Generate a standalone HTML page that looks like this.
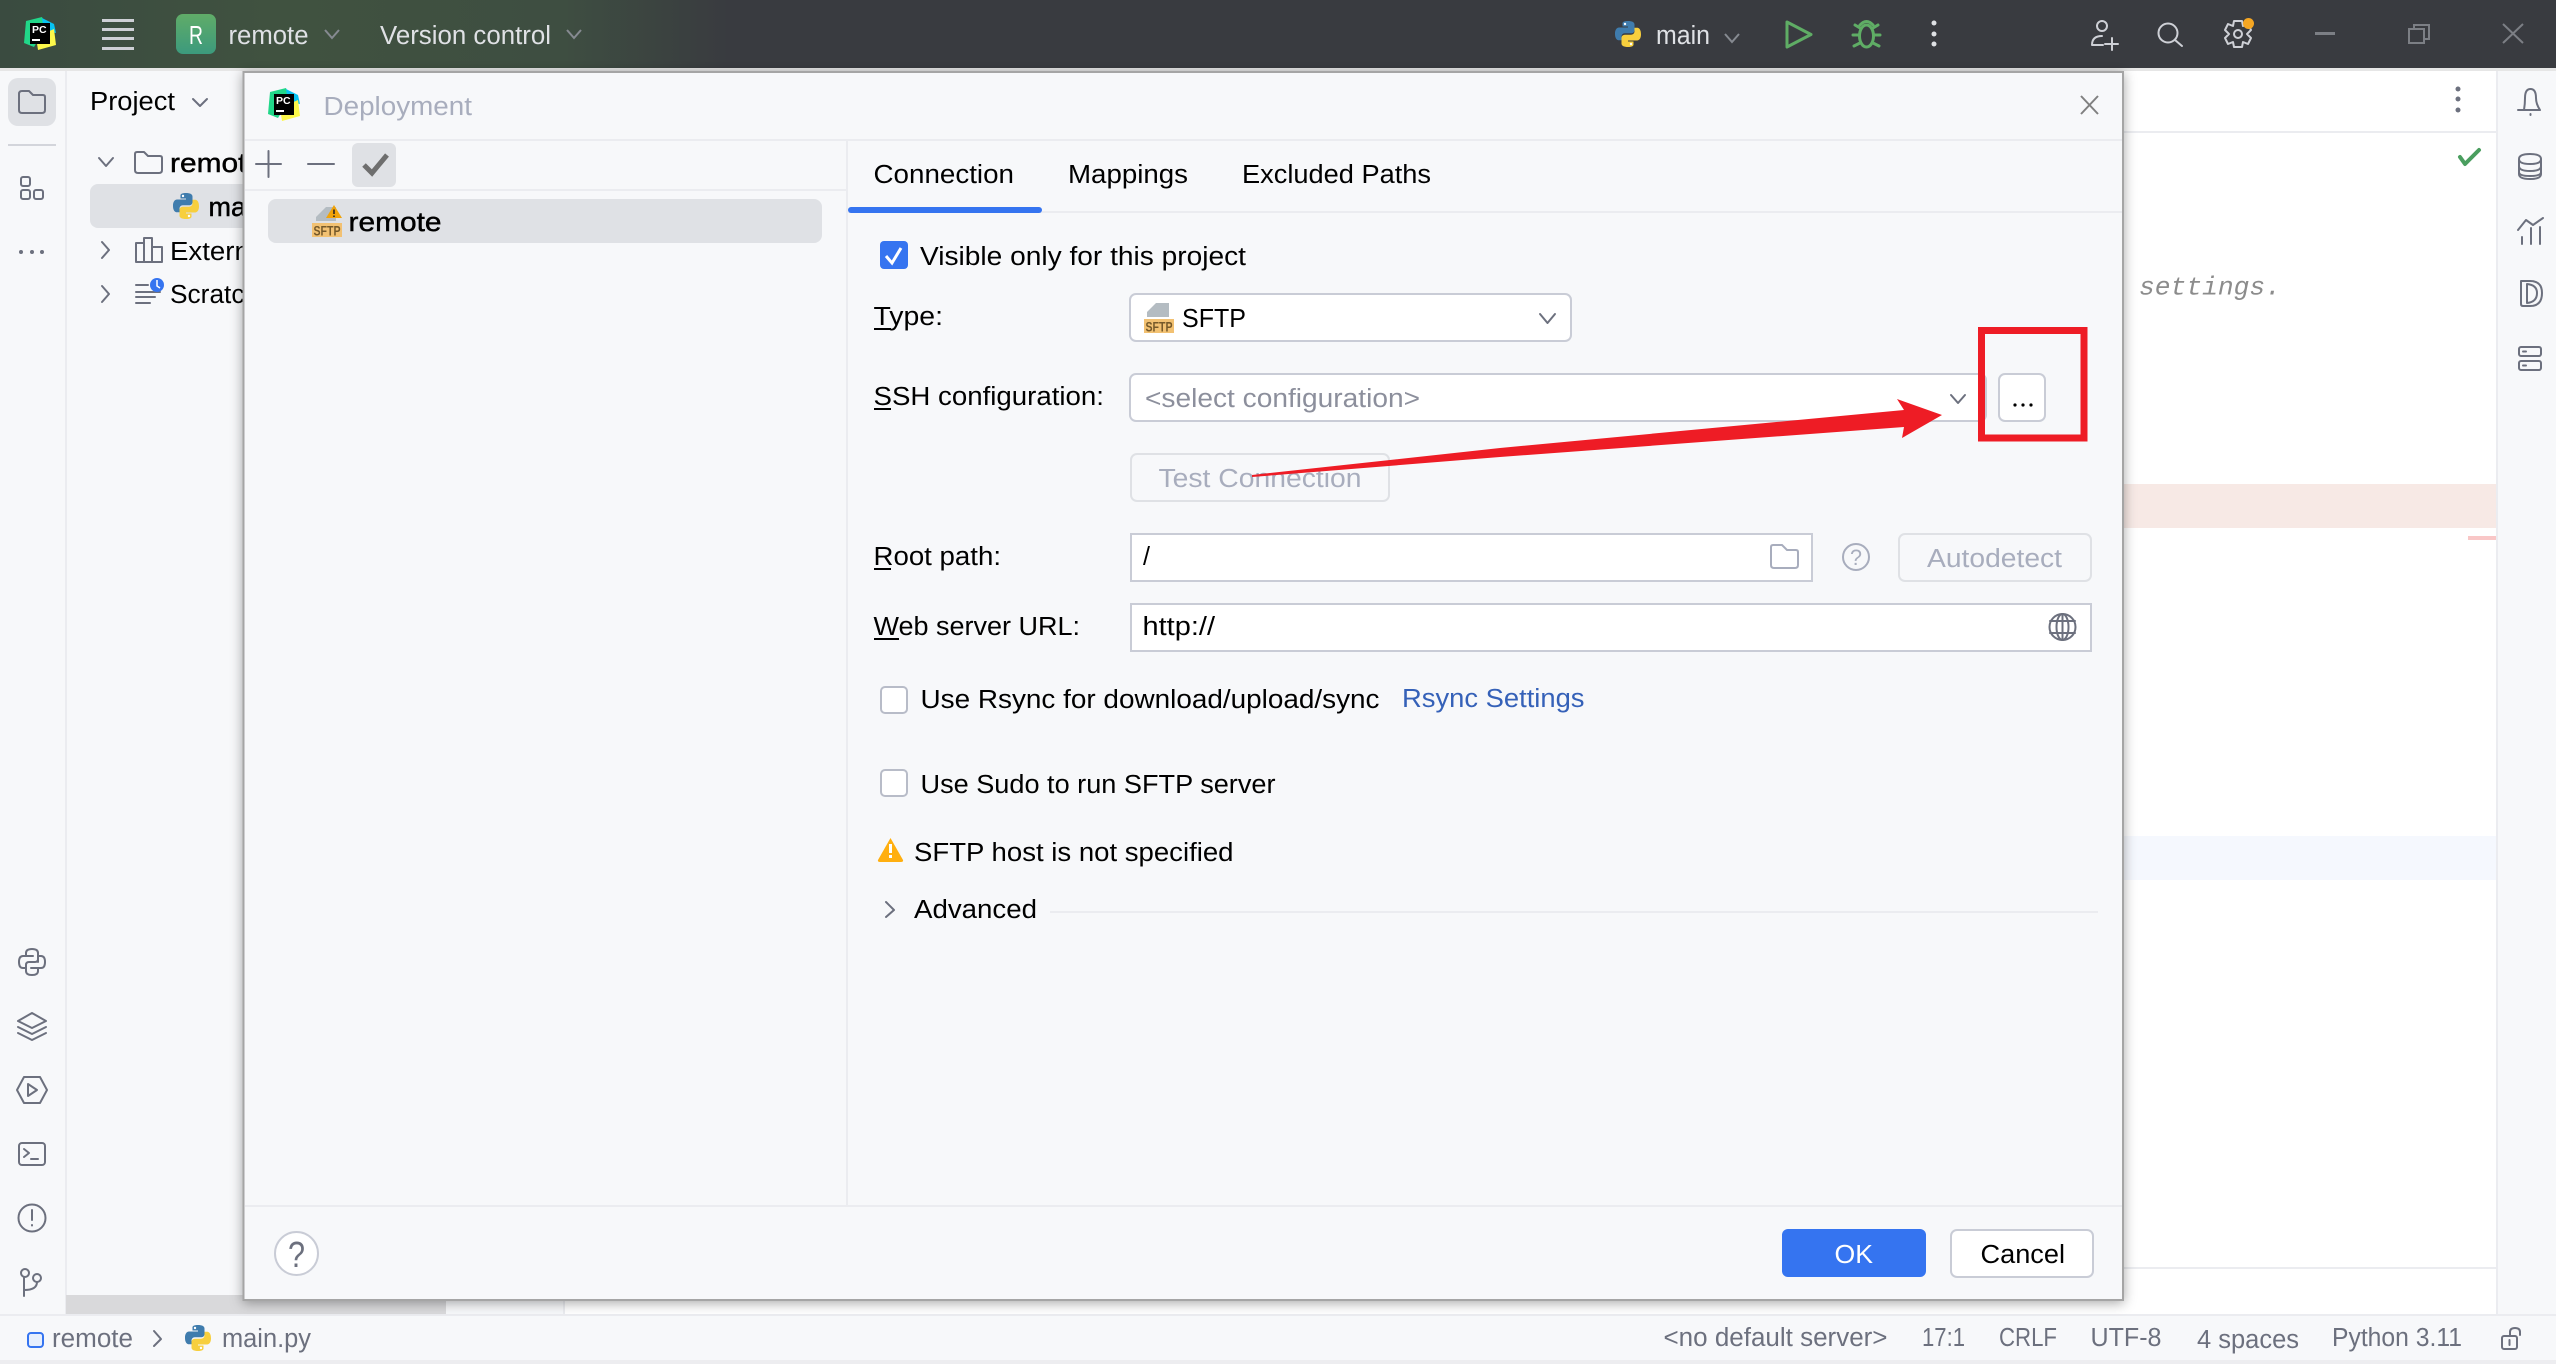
<!DOCTYPE html>
<html><head><meta charset="utf-8"><title>Deployment</title>
<style>
html,body{margin:0;padding:0;background:#fff;width:2556px;height:1364px;overflow:hidden}
svg{display:block}
text{font-family:"Liberation Sans",sans-serif;font-size:25.5px;fill:#000;white-space:pre}
.s{fill:none;stroke:#6c707e;stroke-width:2;stroke-linecap:round;stroke-linejoin:round}
.l{fill:none;stroke:#ced0d6;stroke-width:2;stroke-linecap:round;stroke-linejoin:round}
.g{fill:none;stroke:#5fad65;stroke-width:3;stroke-linecap:round;stroke-linejoin:round}
.w{fill:#dfe1e5}.d{fill:#a8adbd}.m{fill:#6c707e}.b{stroke:#000;stroke-width:.45px}
</style></head><body>
<svg width="2556" height="1364" viewBox="0 0 2556 1364" xmlns="http://www.w3.org/2000/svg">
<defs>
<linearGradient id="tb" x1="0" x2="1" y1="0" y2="0"><stop offset="0" stop-color="#3a4b40"/><stop offset=".11" stop-color="#405240"/><stop offset=".22" stop-color="#3e4e41"/><stop offset=".285" stop-color="#393b40"/><stop offset="1" stop-color="#393b40"/></linearGradient>
<linearGradient id="rb" x1="0" x2="0" y1="0" y2="1"><stop offset="0" stop-color="#60ac68"/><stop offset="1" stop-color="#3c9a7d"/></linearGradient>
<filter id="sh" x="-5%" y="-5%" width="110%" height="110%"><feDropShadow dx="0" dy="2" stdDeviation="6" flood-color="#000" flood-opacity=".35"/></filter>
<symbol id="py" viewBox="0 0 28 28"><path fill="#3f7cad" d="M13.8 1C8 1 8.5 3.5 8.5 3.5V6.500H14V7.500H5.500C5.500 7.500 1 7 1 13.800C1 20.500 4.800 20.300 4.800 20.300H7.500V17C7.500 17 7.300 13.300 11 13.300H17C17 13.300 20.500 13.400 20.500 10V4.500C20.500 4.500 21 1 13.800 1Z"/><path fill="#f7cf3d" d="M14.200 27C20 27 19.500 24.500 19.500 24.500V21.500H14V20.500H22.500C22.500 20.500 27 21 27 14.200C27 7.500 23.200 7.700 23.200 7.700H20.500V11C20.500 11 20.700 14.700 17 14.700H11C11 14.700 7.500 14.600 7.500 18V23.500C7.500 23.500 7 27 14.200 27Z"/><circle cx="11" cy="4" r="1.200" fill="#fff"/><circle cx="17" cy="24" r="1.200" fill="#fff"/></symbol>
<symbol id="pc" viewBox="0 0 32 34"><polygon fill="#21d789" points="2,4 18,0 22,10 10,30 0,26"/><polygon fill="#07c3f2" points="18,1 30,7 32,16 20,14"/><polygon fill="#fcf84a" points="12,20 30,12 32,28 14,33"/><rect x="6" y="6" width="20" height="21" fill="#000"/><text x="8" y="16" style="font-size:10.5px;font-weight:bold;fill:#fff">PC</text><rect x="8" y="22" width="8" height="2" fill="#fff"/></symbol>
</defs>

<!-- base -->
<rect width="2556" height="1364" fill="#fff"/>
<rect width="2556" height="68" fill="url(#tb)"/>
<rect y="68" width="2556" height="3" fill="#e6e6e6"/>
<rect y="71" x="0" width="66" height="1243" fill="#f7f8fa"/>
<rect y="71" x="65" width="2" height="1243" fill="#ebecf0"/>
<rect y="71" x="67" width="497" height="1243" fill="#f7f8fa"/>
<rect y="71" x="563" width="2" height="1243" fill="#ebecf0"/>
<rect x="2124" y="131" width="372" height="2" fill="#ebecf0"/>
<rect x="2124" y="484" width="372" height="44" fill="#f7e9e5"/>
<rect x="2124" y="836" width="372" height="44" fill="#f5f8fe"/>
<rect x="2124" y="1267" width="372" height="2" fill="#ebecf0"/>
<rect x="2468" y="536" width="28" height="4" fill="#f9c7c7"/>
<rect x="2498" y="71" width="58" height="1243" fill="#f7f8fa"/>
<rect x="2496" y="71" width="2" height="1243" fill="#ebecf0"/>
<rect x="66" y="1295" width="380" height="19" fill="#d9d9db"/>
<rect y="1314" width="2556" height="2" fill="#ebecf0"/>
<rect y="1316" width="2556" height="44" fill="#f7f8fa"/>
<rect y="1360" width="2556" height="4" fill="#ededf0"/>

<!-- title bar -->
<use href="#pc" x="24" y="17" width="32" height="34"/>
<g fill="#ced0d6"><rect x="102" y="19" width="32" height="3"/><rect x="102" y="28" width="32" height="3"/><rect x="102" y="37" width="32" height="3"/><rect x="102" y="47" width="32" height="3"/></g>
<rect x="176" y="14" width="40" height="40" rx="7" fill="url(#rb)"/>
<text x="189" y="44" textLength="14" lengthAdjust="spacingAndGlyphs" style="font-size:26px;fill:#fff">R</text>
<text class="w" x="228.500" y="44" textLength="80" lengthAdjust="spacingAndGlyphs">remote</text>
<polyline points="325,30 332,38 339,30" fill="none" stroke="#868a91" stroke-width="2"/>
<text class="w" x="380" y="44" textLength="171" lengthAdjust="spacingAndGlyphs">Version control</text>
<polyline points="567,30 574,38 581,30" fill="none" stroke="#868a91" stroke-width="2"/>
<use href="#py" x="1614" y="20" width="28" height="28"/>
<text class="w" x="1656" y="44" textLength="54" lengthAdjust="spacingAndGlyphs">main</text>
<polyline points="1725,34 1732,42 1739,34" fill="none" stroke="#868a91" stroke-width="2"/>
<path class="g" d="M1787 22L1811 34.500L1787 47Z"/>
<g class="g"><ellipse cx="1866.500" cy="36" rx="7" ry="11"/><path d="M1860 25Q1866.500 18 1873 25M1859 35H1853M1874 35H1880M1860 43L1854 46M1873 43L1879 46M1860 28L1855 25M1873 28L1878 25"/></g>
<g fill="#dfe1e5"><circle cx="1934" cy="23" r="2.500"/><circle cx="1934" cy="34" r="2.500"/><circle cx="1934" cy="44" r="2.500"/></g>
<g class="l"><ellipse cx="2102" cy="26" rx="5" ry="5"/><path d="M2092 45Q2092 36 2102 36M2092 45H2103M2112 38V50M2105 44H2118"/></g>
<g class="l"><circle cx="2168" cy="33" r="9.500"/><path d="M2175 40L2182 46"/></g>
<g class="l"><polygon points="2234,21 2242,21 2243,26 2248,24 2251,30 2247,34 2251,38 2248,44 2243,42 2242,47 2234,47 2233,42 2228,44 2225,38 2229,34 2225,30 2228,24 2233,26"/><circle cx="2238" cy="34" r="4"/></g>
<circle cx="2248.500" cy="23.500" r="5.500" fill="#f5a623"/>
<rect x="2315" y="32" width="20" height="3" fill="#7c7f85"/>
<g fill="none" stroke="#7c7f85" stroke-width="2"><path d="M2414 29V25H2429V39H2424"/><rect x="2409" y="29" width="15" height="14"/><path d="M2503 24L2523 43M2523 24L2503 43"/></g>

<!-- left stripe -->
<rect x="8" y="78" width="48" height="48" rx="10" fill="#dfe1e5"/>
<path class="s" d="M19 94Q19 91 22 91H29L33 95H43Q45 95 45 97V110Q45 113 42 113H22Q19 113 19 110Z"/>
<rect x="8" y="144" width="48" height="2" fill="#d3d5db"/>
<g class="s"><rect x="21" y="177" width="9" height="9" rx="2"/><rect x="21" y="190" width="9" height="9" rx="2"/><rect x="34" y="190" width="9" height="9" rx="2"/></g>
<g class="m"><circle cx="21" cy="252" r="2"/><circle cx="32" cy="252" r="2"/><circle cx="42" cy="252" r="2"/></g>
<g class="s">
<path d="M26 956V953Q26 949 32 949Q38 949 38 953V959Q38 962 35 962H29Q26 962 26 965V968H23Q19 968 19 962Q19 956 23 956H33M31 968H38V971Q38 975 32 975Q26 975 26 971V968M38 962V956H41Q45 956 45 962Q45 968 41 968H38"/>
<polygon points="32,1013 46,1021 32,1028 18,1021"/><polyline points="18,1027 32,1034 46,1027"/><polyline points="18,1033 32,1040 46,1033"/>
<polygon points="17,1090 24,1077 40,1077 47,1090 40,1103 24,1103"/><polygon points="28,1084 37,1090 28,1096"/>
<rect x="19" y="1143" width="26" height="22" rx="3"/><polyline points="24,1149 29,1153 24,1157"/><path d="M31 1159H38"/>
<circle cx="32" cy="1218" r="13.500"/><path d="M32 1210V1220M32 1225V1225.500"/>
<circle cx="25" cy="1273" r="4"/><circle cx="37" cy="1278" r="4"/><path d="M24 1277V1296M24 1290Q37 1290 37 1282"/>
</g>

<!-- project panel -->
<text x="90" y="110" textLength="85" lengthAdjust="spacingAndGlyphs">Project</text>
<polyline class="s" points="193,99 200,106 207,99"/>
<polyline class="s" points="99,158 106,166 113,158"/>
<path class="s" d="M135 154Q135 152 137 152H144L148 156H160Q162 156 162 158V170Q162 173 159 173H138Q135 173 135 170Z"/>
<text class="b" x="170" y="172" textLength="93" lengthAdjust="spacingAndGlyphs" style="font-size:27px">remote</text>
<rect x="90" y="184" width="240" height="44" rx="8" fill="#dfe1e5"/>
<use href="#py" x="172" y="192" width="28" height="28"/>
<text class="b" x="208.500" y="216" style="font-size:27px">main.py</text>
<polyline class="s" points="102,242 109,250 102,258"/>
<path class="s" d="M136 262V243H144V262M144 262V238H152V262M152 262V247H162V262H136"/>
<text x="170" y="260" textLength="215" lengthAdjust="spacingAndGlyphs">External Libraries</text>
<polyline class="s" points="102,286 109,294 102,302"/>
<path class="s" d="M136 285H148M136 292H160M136 297H155M136 303H150"/>
<circle cx="157" cy="285" r="7" fill="#3574f0"/><path d="M157 280V286L160 288" stroke="#fff" stroke-width="1.500" fill="none"/>
<text x="170" y="303" textLength="285" lengthAdjust="spacingAndGlyphs">Scratches and Consoles</text>

<!-- editor & right stripe -->
<g fill="#6c707e"><circle cx="2458" cy="89" r="2.500"/><circle cx="2458" cy="99" r="2.500"/><circle cx="2458" cy="110" r="2.500"/></g>
<polyline points="2460,157 2465,164 2479,150" fill="none" stroke="#4a9e5f" stroke-width="4" stroke-linecap="round" stroke-linejoin="round"/>
<text x="2139" y="294.500" textLength="142" lengthAdjust="spacingAndGlyphs" style="font-family:'Liberation Mono',monospace;font-style:italic;font-size:26px;fill:#8c8c8c">settings.</text>
<g class="s">
<path d="M2524 110Q2525 104 2525 98Q2525 89 2530.500 89Q2536 89 2536 98Q2536 104 2540 110H2518ZM2530.500 114V115"/>
<path d="M2519 159V174Q2519 179 2530 179Q2541 179 2541 174V159M2519 159Q2519 154 2530 154Q2541 154 2541 159Q2541 164 2530 164Q2519 164 2519 159ZM2519 166Q2519 171 2530 171Q2541 171 2541 166M2519 172Q2519 176 2530 176Q2541 176 2541 172"/>
<path d="M2518 230L2526 220L2533 225L2543 218M2522 237V244M2531 228V244M2540 227V244"/>
<path d="M2521 281H2530Q2542 281 2542 293Q2542 306 2530 306H2523Q2521 306 2521 304ZM2527 284Q2537 285 2537 293Q2537 302 2527 303Z"/>
<rect x="2519" y="347" width="22" height="9" rx="2"/><rect x="2519" y="361" width="22" height="9" rx="2"/><path d="M2523 351.500H2526M2523 365.500H2526"/>
</g>

<!-- status bar -->
<rect x="28" y="1333" width="15" height="14" rx="3" fill="#e7effd" stroke="#3574f0" stroke-width="2"/>
<text class="m" x="52" y="1347" textLength="81" lengthAdjust="spacingAndGlyphs">remote</text>
<polyline class="s" points="154,1331 161,1339 154,1346"/>
<use href="#py" x="184" y="1324" width="28" height="28"/>
<text class="m" x="222" y="1347" textLength="89" lengthAdjust="spacingAndGlyphs">main.py</text>
<text class="m" x="1663.500" y="1346" textLength="224" lengthAdjust="spacingAndGlyphs">&lt;no default server&gt;</text>
<text class="m" x="1922" y="1346" textLength="43" lengthAdjust="spacingAndGlyphs">17:1</text>
<text class="m" x="1999" y="1346" textLength="58" lengthAdjust="spacingAndGlyphs">CRLF</text>
<text class="m" x="2090.500" y="1346" textLength="71" lengthAdjust="spacingAndGlyphs">UTF-8</text>
<text class="m" x="2197" y="1348" textLength="102" lengthAdjust="spacingAndGlyphs">4 spaces</text>
<text class="m" x="2332" y="1346" textLength="130" lengthAdjust="spacingAndGlyphs">Python 3.11</text>
<g class="s"><rect x="2502" y="1336" width="15" height="13" rx="2"/><path d="M2510 1336V1332Q2510 1328 2515 1328Q2520 1328 2520 1332V1335M2509.500 1340V1345"/></g>

<!-- dialog -->
<rect x="243.500" y="72" width="1879.500" height="1228" fill="#f7f8fa" stroke="#a5a5a5" stroke-width="2" filter="url(#sh)"/>
<rect x="245" y="139" width="1877" height="2" fill="#ebecf0"/>
<rect x="245" y="189" width="601" height="2" fill="#ebecf0"/>
<rect x="846" y="141" width="2" height="1065" fill="#ebecf0"/>
<rect x="245" y="1205" width="1877" height="2" fill="#ebecf0"/>
<rect x="848" y="211" width="1274" height="2" fill="#ebecf0"/>
<use href="#pc" x="268" y="88" width="32" height="34"/>
<text class="d" x="323.500" y="115" textLength="148.500" lengthAdjust="spacingAndGlyphs">Deployment</text>
<path d="M2081 96L2098 114M2098 96L2081 114" fill="none" stroke="#808080" stroke-width="2"/>

<path class="s" d="M256 164H281M268.500 151V177M308 164H334"/>
<rect x="352" y="143" width="44" height="44" rx="6" fill="#dfe1e5"/>
<polyline points="364,165 372,173 387,155" fill="none" stroke="#6e6e6e" stroke-width="5"/>
<rect x="268" y="199" width="554" height="44" rx="8" fill="#dfe1e5"/>
<polygon points="316,221 316,217 326,207 336,207 336,221" fill="#b4bcc2"/>
<rect x="312" y="223" width="30" height="14" fill="#f2c172"/>
<text x="313.500" y="235.500" textLength="27" lengthAdjust="spacingAndGlyphs" style="font-size:14px;font-weight:bold;fill:#75592a">SFTP</text>
<path d="M334 205L342 218H326Z" fill="#f0a30a"/><path d="M334 209.500V214M334 215.500V217" stroke="#3d3020" stroke-width="1.800"/>
<text class="b" x="348.500" y="231" textLength="93" lengthAdjust="spacingAndGlyphs" style="font-size:27px">remote</text>

<!-- tabs -->
<text x="873.500" y="183" textLength="140.500" lengthAdjust="spacingAndGlyphs">Connection</text>
<text x="1068" y="183" textLength="120" lengthAdjust="spacingAndGlyphs">Mappings</text>
<text x="1242" y="183" textLength="189" lengthAdjust="spacingAndGlyphs">Excluded Paths</text>
<rect x="848" y="207" width="194" height="6" rx="3" fill="#3574f0"/>

<!-- form -->
<rect x="880" y="241" width="28" height="28" rx="4" fill="#3574f0"/>
<polyline points="886,256 892,263 901,248" fill="none" stroke="#fff" stroke-width="3"/>
<text x="920" y="265" textLength="326" lengthAdjust="spacingAndGlyphs">Visible only for this project</text>

<text x="873.500" y="325" textLength="69.500" lengthAdjust="spacingAndGlyphs">Type:</text><rect x="874" y="328" width="17" height="2"/>
<rect x="1130" y="294" width="441" height="47" rx="6" fill="#fff" stroke="#c9ccd6" stroke-width="2"/>
<polygon points="1147,317 1147,312 1156,303 1169,303 1169,317" fill="#b4bcc2"/>
<rect x="1144" y="319" width="30" height="14" fill="#f2c172"/>
<text x="1145.500" y="331.500" textLength="27" lengthAdjust="spacingAndGlyphs" style="font-size:14px;font-weight:bold;fill:#75592a">SFTP</text>
<text x="1182" y="327" textLength="64" lengthAdjust="spacingAndGlyphs">SFTP</text>
<polyline class="s" points="1540,314 1547.500,323 1555,314"/>

<text x="873.500" y="405" textLength="230.500" lengthAdjust="spacingAndGlyphs">SSH configuration:</text><rect x="874" y="408" width="17" height="2"/>
<rect x="1130" y="374" width="856" height="47" rx="6" fill="#fff" stroke="#c9ccd6" stroke-width="2"/>
<text x="1145" y="407" textLength="275" lengthAdjust="spacingAndGlyphs" style="fill:#8c8f9c">&lt;select configuration&gt;</text>
<polyline class="s" points="1951,395 1958,403 1965,395"/>
<rect x="1999" y="374" width="46" height="47" rx="6" fill="#fff" stroke="#c9ccd6" stroke-width="2"/>
<g><circle cx="2015" cy="405" r="1.600"/><circle cx="2023" cy="405" r="1.600"/><circle cx="2031" cy="405" r="1.600"/></g>

<rect x="1131" y="454" width="258" height="47" rx="6" fill="none" stroke="#dfe1e5" stroke-width="2"/>
<text class="d" x="1158.500" y="487" textLength="203" lengthAdjust="spacingAndGlyphs">Test Connection</text>

<text x="873.500" y="565" textLength="127.500" lengthAdjust="spacingAndGlyphs">Root path:</text><rect x="874" y="568" width="17" height="2"/>
<rect x="1131" y="534" width="681" height="47" fill="#fff" stroke="#c9ccd6" stroke-width="2"/>
<text x="1143" y="565" textLength="7" lengthAdjust="spacingAndGlyphs">/</text>
<path d="M1771 547Q1771 545 1773 545H1782L1787 550H1796Q1798 550 1798 552V565Q1798 568 1795 568H1774Q1771 568 1771 565Z" fill="none" stroke="#a8adbd" stroke-width="2"/>
<circle cx="1856" cy="557" r="13" fill="none" stroke="#a8adbd" stroke-width="2"/>
<text class="d" x="1850" y="565" textLength="12" lengthAdjust="spacingAndGlyphs" style="font-size:22px">?</text>
<rect x="1899" y="534" width="192" height="47" rx="6" fill="none" stroke="#dfe1e5" stroke-width="2"/>
<text class="d" x="1927" y="567" textLength="135" lengthAdjust="spacingAndGlyphs">Autodetect</text>

<text x="873.500" y="635" textLength="206.500" lengthAdjust="spacingAndGlyphs">Web server URL:</text><rect x="874" y="638" width="25" height="2"/>
<rect x="1131" y="604" width="960" height="47" fill="#fff" stroke="#c9ccd6" stroke-width="2"/>
<text x="1142.500" y="635" textLength="72.500" lengthAdjust="spacingAndGlyphs">http://</text>
<g class="s"><circle cx="2062.500" cy="627" r="13"/><ellipse cx="2062.500" cy="627" rx="6" ry="13"/><path d="M2050 621H2075M2050 633H2075M2062.500 614V640"/></g>

<rect x="881" y="687" width="26" height="26" rx="4" fill="#fff" stroke="#b8bcc8" stroke-width="2"/>
<text x="920.500" y="708" textLength="459" lengthAdjust="spacingAndGlyphs">Use Rsync for download/upload/sync</text>
<text x="1402" y="707" textLength="182.500" lengthAdjust="spacingAndGlyphs" style="fill:#3561b8">Rsync Settings</text>
<rect x="881" y="770" width="26" height="26" rx="4" fill="#fff" stroke="#b8bcc8" stroke-width="2"/>
<text x="920.500" y="793" textLength="355" lengthAdjust="spacingAndGlyphs">Use Sudo to run SFTP server</text>

<path d="M890.500 838L903 860Q903.500 862 901 862H880Q877.500 862 878 860Z" fill="#ffaf0f"/>
<rect x="889" y="844" width="3" height="9" fill="#fff"/><rect x="889" y="855" width="3" height="3" fill="#fff"/>
<text x="914" y="861" textLength="319.500" lengthAdjust="spacingAndGlyphs">SFTP host is not specified</text>
<polyline class="s" points="886,902 894,910 886,917"/>
<text x="914" y="918" textLength="123" lengthAdjust="spacingAndGlyphs">Advanced</text>
<rect x="1050" y="911" width="1048" height="2" fill="#ebecf0"/>

<!-- footer -->
<circle cx="296.500" cy="1253.500" r="21.500" fill="#fff" stroke="#c9ccd6" stroke-width="2"/>
<text class="m" x="288" y="1267" textLength="17" lengthAdjust="spacingAndGlyphs" style="font-size:36px">?</text>
<rect x="1782" y="1229" width="144" height="48" rx="6" fill="#3574f0"/>
<text x="1834.500" y="1263" textLength="38.500" lengthAdjust="spacingAndGlyphs" style="fill:#fff">OK</text>
<rect x="1951" y="1230" width="142" height="47" rx="6" fill="#fff" stroke="#c9ccd6" stroke-width="2"/>
<text x="1980.500" y="1263" textLength="84.500" lengthAdjust="spacingAndGlyphs">Cancel</text>

<!-- annotations -->
<polygon points="1252,475 1500,448 1904,410 1897,399 1942,415 1902,438 1904,427 1500,457 1252,477" fill="#ee1c25"/>
<path d="M1981.500 330.500H2084V438H1981.500Z" fill="none" stroke="#ee1c25" stroke-width="7"/>
</svg>
</body></html>
